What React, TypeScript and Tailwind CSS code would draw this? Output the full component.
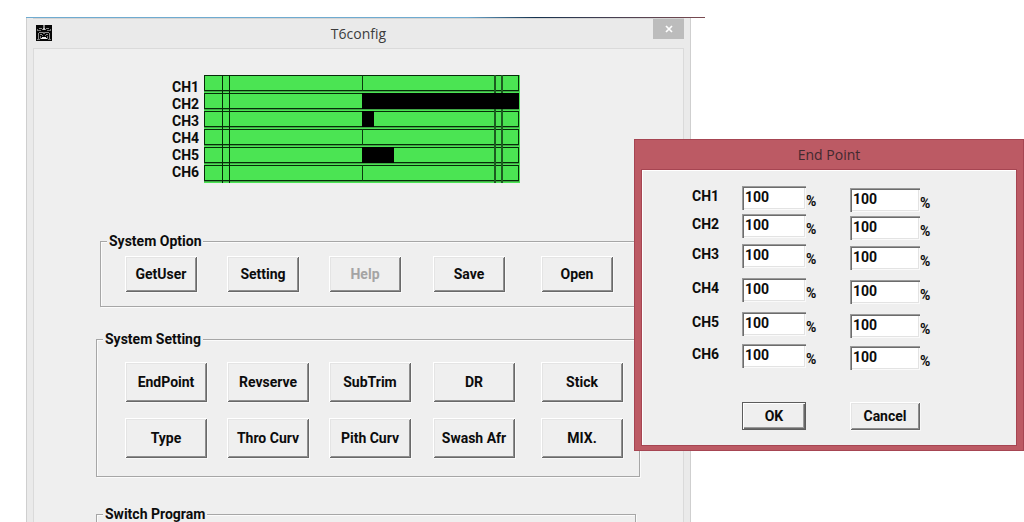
import { useState } from "react";

const raised =
  "bg-[#efefef] text-center shadow-[inset_1px_1px_#ffffff,inset_-1px_-1px_#696969,inset_2px_2px_#e4e4e4,inset_-2px_-2px_#8e8e8e,1px_1px_#f8f8f8]";

const group =
  "min-w-0 border border-[#a6a6a6] shadow-[inset_1px_1px_#fbfbfb,1px_1px_#fbfbfb]";

const columns = "grid grid-cols-[102fr_102fr_104fr_108fr_98fr]";

const channels = ["CH1", "CH2", "CH3", "CH4", "CH5", "CH6"];

// Deflection of each channel to the right of its centre line.
const levels = [0, 157, 12, 0, 32, 0];

function AppIcon() {
  return (
    <svg className="h-4 w-4" viewBox="0 0 16 16" aria-hidden="true" shapeRendering="crispEdges">
      <rect width="16" height="16" fill="#060606" />
      <path d="M7 0h2v3h-2z" fill="#8a8a8a" />
      <path d="M3 3h3v1h-3zM10 3h3v1h-3zM6 4h4v1h-4z" fill="#8c8c8c" />
      <path d="M7 3h2v2h-2z" fill="#c8c8c8" />
      <path d="M1 4h1v2h-1zM14 4h1v2h-1zM2 5h3v1h-3zM11 5h3v1h-3z" fill="#777" />
      <path d="M3 7h4v1h-4zM9 7h4v1h-4zM2 8h1v6h-1zM13 8h1v6h-1zM4 9h2v1h-2zM10 9h2v1h-2z" fill="#8c8c8c" />
      <path d="M7 7h2v2h-2zM1 14h3v1h-3zM12 14h3v1h-3zM4 11h1v3h-1zM11 11h1v3h-1zM6 10h1v1h-1zM9 10h1v1h-1z" fill="#777" />
      <path d="M6 12h4v1h1v1h-6v-1h1z" fill="#eeeeee" />
    </svg>
  );
}

function ChannelMeter() {
  return (
    <svg
      className="h-[108px] w-[316px]"
      viewBox="0 0 316 108"
      role="img"
      aria-label="Channel levels"
      shapeRendering="crispEdges"
    >
      <rect width="316" height="108" fill="#4be453" />
      {levels.map((level, i) => (
        <g key={i}>
          <rect x="0" y={i * 18 + 16} width="315" height="1" fill="#3fa745" />
          <rect x="0.5" y={i * 18 + 0.5} width="314" height="15" fill="#4be453" stroke="#062b08" />
          <rect x="158" y={i * 18} width="1" height="16" fill="#0b3a0e" />
        </g>
      ))}
      <path d="M18 0h1v108h-1zM25 0h1v108h-1z" fill="#052607" />
      <path d="M290 0h2v108h-2zM297 0h2v108h-2z" fill="#1c5c20" />
      {levels.map((level, i) =>
        level > 0 ? <rect key={i} x="158" y={i * 18} width={level} height="16" fill="#000" /> : null,
      )}
    </svg>
  );
}

function GroupLegend({ children }: { children: string }) {
  return <legend className="ml-[6px] bg-[#efefef] px-[2px] leading-4">{children}</legend>;
}

function MainWindow() {
  const options = ["GetUser", "Setting", "Help", "Save", "Open"];
  const settings = [
    "EndPoint", "Revserve", "SubTrim", "DR", "Stick",
    "Type", "Thro Curv", "Pith Curv", "Swash Afr", "MIX.",
  ];
  return (
    <section className="mr-[333px] ml-[26px] flex flex-1 flex-col border-x border-[#cfcfcf] bg-[#eaeaea] px-[6px]">
      <header className="flex h-[30px] items-start border-t border-[#d4d4d4]">
        <div className="w-[31px] pt-[6px] pl-[3px]">
          <AppIcon />
        </div>
        <h1 className="flex-1 pt-[5px] text-center font-['Open_Sans',sans-serif] text-[14px] leading-5 font-normal text-[#3c3c3c]">
          T6config
        </h1>
        <button
          type="button"
          aria-label="Close"
          className="flex h-5 w-[31px] items-center justify-center bg-[#bcbcbc]"
        >
          <svg className="h-2 w-2" viewBox="0 0 8 8" aria-hidden="true">
            <path d="M1 1l6 6M7 1l-6 6" stroke="#fff" strokeWidth="1.7" />
          </svg>
        </button>
      </header>
      <div className="flex flex-1 flex-col border border-b-0 border-[#dadada] bg-[#efefef] pt-[26px]">
        <div className="flex pl-[138px]">
          <ul className="w-8 pt-1 leading-[17px]">
            {channels.map((name) => (
              <li key={name}>{name}</li>
            ))}
          </ul>
          <ChannelMeter />
        </div>
        <div className="flex flex-1 flex-col pt-[50px] pr-[43px] pl-[62px]">
          <fieldset className={`ml-1 ${group}`}>
            <GroupLegend>System Option</GroupLegend>
            <div className={`${columns} pt-[7px] pb-[14px] pl-6`}>
              {options.map((name) => (
                <button
                  key={name}
                  type="button"
                  disabled={name === "Help"}
                  className={`h-9 w-[72px] disabled:text-[#a4a4a4] ${raised}`}
                >
                  {name}
                </button>
              ))}
            </div>
          </fieldset>
          <fieldset className={`mt-6 ${group}`}>
            <GroupLegend>System Setting</GroupLegend>
            <div className={`${columns} gap-y-4 pt-[15px] pb-[18px] pl-7`}>
              {settings.map((name) => (
                <button key={name} type="button" className={`h-10 w-[82px] whitespace-nowrap ${raised}`}>
                  {name}
                </button>
              ))}
            </div>
          </fieldset>
          <fieldset className={`mt-[29px] mr-1 flex-1 border-b-0 ${group}`}>
            <GroupLegend>Switch Program</GroupLegend>
          </fieldset>
        </div>
      </div>
    </section>
  );
}

const field =
  "block h-6 w-full bg-white px-[3px] pb-[2px] shadow-[inset_1px_1px_#9a9a9a,inset_2px_2px_#6c6c6c,inset_-1px_-1px_#fafafa,inset_-2px_-2px_#e3e3e3] outline-none";

function EndPointDialog() {
  const [low, setLow] = useState(channels.map(() => "100"));
  const [high, setHigh] = useState(channels.map(() => "100"));
  const replace = (list: string[], index: number, value: string) =>
    list.map((item, i) => (i === index ? value : item));

  return (
    <section
      role="dialog"
      aria-labelledby="end-point-title"
      className="absolute top-[139px] right-0 w-[390px] border border-[#a64552] bg-[#bc5a64] px-[7px] pb-[5px]"
    >
      <h2
        id="end-point-title"
        className="h-[30px] pt-[5px] text-center font-['Open_Sans',sans-serif] text-[14px] leading-5 font-normal text-[#41292f]"
      >
        End Point
      </h2>
      <div className="bg-[#efefef] pt-4 pb-[15px] pl-[50px] shadow-[0_0_0_1px_#a64552,inset_1px_1px_#ffffff]">
        <div className="grid grid-cols-[50px_64px_44px_70px_20px] grid-rows-[28px_30px_34px_34px_32px_58px] items-start">
          {channels.map((name, i) => (
            <div key={name} className="contents">
              <label htmlFor={`low-${name}`} className="pt-[2px] leading-4">
                {name}
              </label>
              <input
                id={`low-${name}`}
                className={field}
                value={low[i]}
                onChange={(e) => setLow(replace(low, i, e.target.value))}
              />
              <span className="pt-[7px] leading-4">%</span>
              <div className="pt-[2px]">
                <input
                  aria-label={`${name} high`}
                  className={field}
                  value={high[i]}
                  onChange={(e) => setHigh(replace(high, i, e.target.value))}
                />
              </div>
              <span className="pt-[9px] leading-4">%</span>
            </div>
          ))}
          <button
            type="button"
            className="col-start-2 h-7 border border-[#5c5c5c] bg-[#efefef] shadow-[inset_1px_1px_#ffffff,inset_-1px_-1px_#696969,inset_-2px_-2px_#9a9a9a]"
          >
            OK
          </button>
          <button type="button" className={`col-start-4 h-7 ${raised}`}>
            Cancel
          </button>
        </div>
      </div>
    </section>
  );
}

export default function App() {
  return (
    <main className="relative flex min-h-screen flex-col overflow-hidden bg-white pt-[17px] font-['Roboto',sans-serif] text-[14px] font-bold text-[#0c0c0c]">
      <div className="mr-[319px] ml-[26px] h-px bg-linear-to-r from-[#6fabd0] from-65% via-[#15334f] via-75% to-[#7a4a50]" />
      <MainWindow />
      <EndPointDialog />
    </main>
  );
}
